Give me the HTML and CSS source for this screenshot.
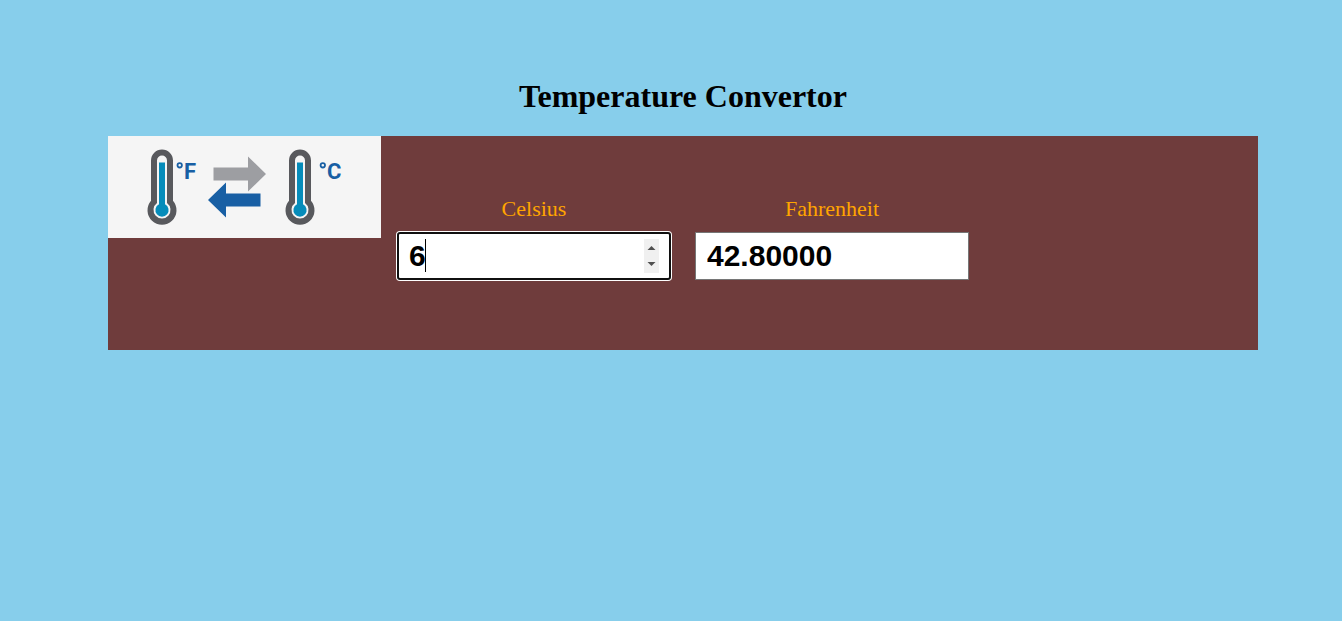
FILE: index.html
```html
<!DOCTYPE html>
<html lang="en">
<head>
<meta charset="utf-8">
<meta name="viewport" content="width=device-width, initial-scale=1">
<title>Temperature Convertor</title>
<link rel="stylesheet" href="styles.css">
</head>
<body>
<main class="page">
  <h1 class="title">Temperature Convertor</h1>
  <form class="panel">
    <svg class="banner" viewBox="0 0 273 102" role="img" aria-label="°F to °C">
      <defs>
        <g id="thermo">
          <path d="M-11 24.500a11 11 0 0 1 22 0V64.800a14.500 14.500 0 1 1-22 0Z" fill="#58595d"/>
          <path d="M-5 24.500a5 5 0 0 1 10 0V67.100a8.500 8.500 0 1 1-10 0Z" fill="#f5f5f5"/>
          <path d="M-3 26.500H3V68.200a6.600 6.600 0 1 1-6 0Z" fill="#058cba"/>
        </g>
      </defs>
      <use href="#thermo" x="54" y="0"/>
      <use href="#thermo" x="192" y="0"/>
      <path d="M105.500 31.500H140V20.500L158 38 140 55.500V44.500H105.500Z" fill="#9d9ea2"/>
      <path d="M152.500 57.500H118V46.500L100 64 118 81.500V70.500H152.500Z" fill="#185fa4"/>
      <circle class="degree" cx="71.700" cy="29.300" r="2.200"/>
      <text class="unit" x="76" y="43">F</text>
      <circle class="degree" cx="214.800" cy="29.300" r="2.200"/>
      <text class="unit" x="219" y="43">C</text>
    </svg>
    <div class="field">
      <label class="label" for="celsius">Celsius</label>
      <div class="control">
        <input class="input input-active" type="number" id="celsius" value="6">
        <span class="caret"></span>
      </div>
    </div>
    <div class="field">
      <label class="label" for="fahrenheit">Fahrenheit</label>
      <div class="control">
        <input class="input" type="number" id="fahrenheit" value="42.80000" step="any">
      </div>
    </div>
  </form>
</main>
</body>
</html>
```
FILE: styles.css
```css
body {
  margin: 0;
  background: #87ceeb;
  font-family: "Liberation Serif", "Times New Roman", serif;
}

.page {
  padding: 78px 84px 0 108px;
}

.title {
  margin: 0 0 21px;
  font-size: 32px;
  line-height: 37px;
  text-align: center;
}

.panel {
  display: flex;
  flex-wrap: wrap;
  align-items: flex-start;
  background: #6f3c3c;
}

.banner {
  width: 273px;
  background: #f5f5f5;
}

.degree {
  fill: none;
  stroke: #185fa4;
  stroke-width: 1.8px;
}

.unit {
  fill: #185fa4;
  font: bold 22px Roboto, sans-serif;
}

.field {
  display: flex;
  flex-direction: column;
  gap: 10px;
  width: 274px;
  margin-left: 24px;
  padding: 60px 0 70px;
}

.banner + .field {
  margin-left: 16px;
}

.label {
  color: orange;
  font-size: 22px;
  line-height: 26px;
  text-align: center;
}

.control {
  position: relative;
}

.input {
  display: block;
  box-sizing: border-box;
  width: 100%;
  height: 48px;
  padding: 0 11px;
  border: 1px solid #767676;
  border-radius: 0;
  outline: none;
  background: #fff;
  color: #000;
  font: bold 30px "Liberation Sans", Arial, sans-serif;
}

.input-active {
  padding: 0 10px;
  border: 2px solid #101010;
  border-radius: 3px;
  box-shadow: 0 0 0 1px #fff;
}

.input::-webkit-inner-spin-button {
  appearance: none;
  width: 15px;
  height: 34px;
  margin: 0;
  opacity: 0;
  background: #f0f0f0 url("data:image/svg+xml,%3Csvg xmlns='http://www.w3.org/2000/svg' width='15' height='34'%3E%3Cpath d='M3.500 11 7.500 7 11.500 11ZM3.500 23 7.500 27 11.500 23Z' fill='%23505050'/%3E%3C/svg%3E") no-repeat;
}

.input-active::-webkit-inner-spin-button {
  opacity: 1;
}

.caret {
  position: absolute;
  top: 7px;
  left: 28px;
  width: 1px;
  height: 33px;
  background: #000;
}
```
